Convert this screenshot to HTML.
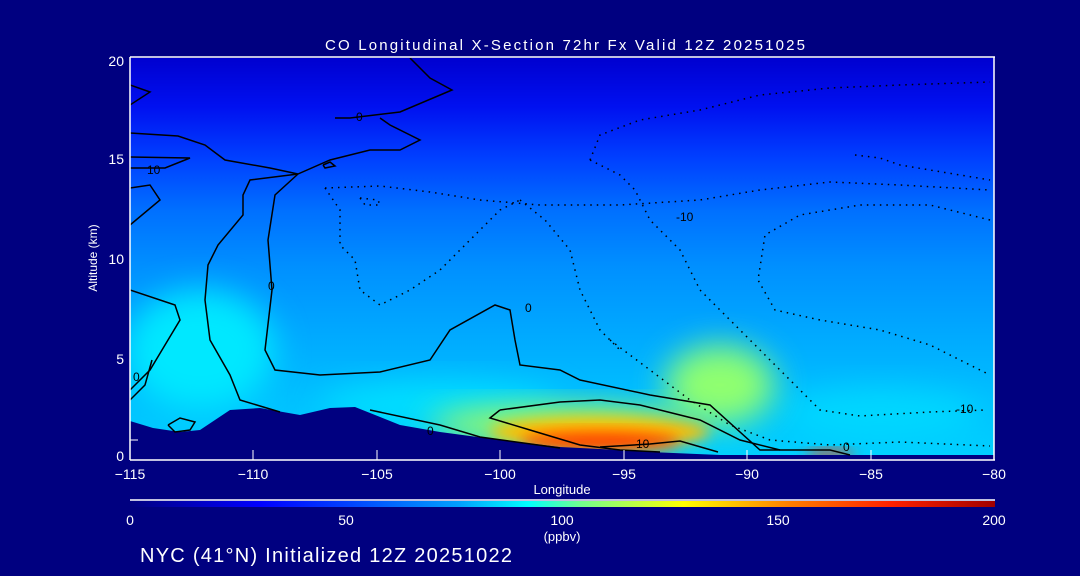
<!DOCTYPE html>
<html><head><style>
html,body{margin:0;padding:0;background:#000080;width:1080px;height:576px;overflow:hidden;}
svg{display:block;}
svg text{font-family:"Liberation Sans",sans-serif;fill:#fff;}
</style></head><body>
<svg width="1080" height="576" viewBox="0 0 1080 576" xmlns="http://www.w3.org/2000/svg">
<defs>
<linearGradient id="bg" x1="0" y1="0" x2="0" y2="1">
<stop offset="0" stop-color="#0000d0"/>
<stop offset="0.12" stop-color="#0010f0"/>
<stop offset="0.25" stop-color="#0040ff"/>
<stop offset="0.38" stop-color="#0070ff"/>
<stop offset="0.52" stop-color="#0090ff"/>
<stop offset="0.68" stop-color="#00a8ff"/>
<stop offset="0.85" stop-color="#00c0ff"/>
<stop offset="1" stop-color="#00d0ff"/>
</linearGradient>
<linearGradient id="cb" x1="0" y1="0" x2="1" y2="0">
<stop offset="0" stop-color="#000080"/>
<stop offset="0.15" stop-color="#0000ff"/>
<stop offset="0.25" stop-color="#0040ff"/>
<stop offset="0.38" stop-color="#00a0ff"/>
<stop offset="0.46" stop-color="#00ffff"/>
<stop offset="0.52" stop-color="#70ff90"/>
<stop offset="0.64" stop-color="#ffff00"/>
<stop offset="0.76" stop-color="#ff8000"/>
<stop offset="0.88" stop-color="#ff2000"/>
<stop offset="1" stop-color="#a00000"/>
</linearGradient>
<filter id="bl" x="-50%" y="-50%" width="200%" height="200%"><feGaussianBlur stdDeviation="16"/></filter>
<filter id="bl2" x="-50%" y="-50%" width="200%" height="200%"><feGaussianBlur stdDeviation="7"/></filter>
<clipPath id="pc"><rect x="130" y="58" width="864" height="402"/></clipPath>
</defs>
<text x="325" y="50" font-size="15" textLength="480" lengthAdjust="spacing">CO Longitudinal X-Section 72hr  Fx Valid 12Z 20251025</text>
<g clip-path="url(#pc)">
<rect x="130" y="58" width="864" height="402" fill="url(#bg)"/>
<ellipse cx="200" cy="350" rx="75" ry="60" fill="#00e8ff" filter="url(#bl)"/>
<ellipse cx="440" cy="405" rx="120" ry="22" fill="#00e0ff" filter="url(#bl)"/>
<ellipse cx="880" cy="415" rx="100" ry="25" fill="#00d8ff" filter="url(#bl)"/>
<ellipse cx="720" cy="385" rx="55" ry="40" fill="#90ff70" filter="url(#bl)"/>
<ellipse cx="560" cy="425" rx="130" ry="18" fill="#b0ff50" filter="url(#bl)"/>
<ellipse cx="600" cy="432" rx="110" ry="15" fill="#ffc000" filter="url(#bl2)"/>
<ellipse cx="600" cy="441" rx="80" ry="9" fill="#ff4000" filter="url(#bl2)"/>
<ellipse cx="830" cy="454" rx="25" ry="4" fill="#ff3000" filter="url(#bl2)"/>
<polygon fill="#000080" points="130,421 153,428 180,432 200,430 230,410 260,408 300,415 330,408 355,407 400,425 440,432 500,440 560,447 600,449 650,452 720,455 994,455 994,470 130,470"/>
<g fill="none" stroke="#000" stroke-width="1.5">
<polyline points="130,85 150,92 130,105"/>
<polyline points="410,58 430,78 452,90 400,112 350,118 335,118"/>
<polyline points="130,133 178,136 205,145 225,160 270,168 298,174 250,180 243,195 243,215 218,245 208,265 205,300 210,340 230,375 240,400 280,412"/>
<polyline points="130,157 190,158 165,168 130,168"/>
<polyline points="130,188 150,185 160,200 130,225"/>
<polyline points="298,174 330,160 370,150 400,150 420,140 390,125 380,118"/>
<polyline points="298,174 275,195 268,240 272,290 265,350 275,370 320,375 380,372 430,360 450,330 495,305 510,310 515,340 520,365 560,370 580,380 650,395 710,405 760,450 830,450 850,455"/>
<polyline points="130,290 175,305 180,320 165,345 150,370 130,390"/>
<polyline points="130,400 145,385 152,360"/>
<polyline points="500,410 560,402 600,400 640,405 680,415 700,420 740,440 780,450"/>
<polyline points="500,410 490,418 530,430 580,445 620,450 660,452"/>
<polyline points="168,425 180,418 195,422 190,430 175,432 168,425"/>
<polyline points="323,165 330,162 335,166 325,168 323,165"/>
<polyline points="370,410 440,425 480,437 560,448"/>
<polyline points="600,447 650,444 680,441 718,452"/>
</g>
<g fill="none" stroke="#000" stroke-width="1.5" stroke-dasharray="1.5,5">
<polyline points="325,188 340,210 340,245 355,260 360,290 380,305 410,290 440,270 470,240 500,210 520,200"/>
<polyline points="325,188 380,186 430,192 480,200 540,205 620,205 700,200 760,190 830,182 900,185 990,190"/>
<polyline points="520,200 545,220 570,250 580,290 600,330 620,350"/>
<polyline points="590,160 600,135 640,120 700,110 760,95 830,88 900,85 990,82"/>
<polyline points="590,160 620,175 635,190 650,220 680,250 700,290 720,310 740,330 770,360 800,390 820,410 860,416 930,412 985,410"/>
<polyline points="610,340 650,370 690,400 730,425 770,440 830,445 900,442 990,446"/>
<polyline points="990,220 930,205 860,205 800,215 765,235 758,280 775,310 820,320 880,330 930,345 990,375"/>
<polyline points="855,155 880,158 900,165 960,175 990,180"/>
<polyline points="360,198 378,200 380,205 365,205 360,198"/>
</g>
<g font-size="12">
<text x="147" y="174" style="fill:#000">10</text>
<text x="676" y="221" style="fill:#000">-10</text>
<text x="956" y="413" style="fill:#000">-10</text>
<text x="636" y="448" style="fill:#000">10</text>
<text x="356" y="121" style="fill:#000">0</text>
<text x="268" y="290" style="fill:#000">0</text>
<text x="525" y="312" style="fill:#000">0</text>
<text x="427" y="435" style="fill:#000">0</text>
<text x="843" y="451" style="fill:#000">0</text>
<text x="133" y="381" style="fill:#000">0</text>
</g>
</g>
<g stroke="#fff" stroke-width="1.5" fill="none">
<line x1="130" y1="57" x2="995" y2="57"/>
<line x1="994" y1="57" x2="994" y2="460"/>
<line x1="130" y1="460" x2="995" y2="460"/>
<line x1="130" y1="57" x2="130" y2="460"/>
<line x1="130" y1="500" x2="995" y2="500"/>
</g>
<g stroke="#fff" stroke-width="1">
<line x1="130" y1="440" x2="138" y2="440"/>
<line x1="253" y1="450" x2="253" y2="460"/><line x1="377" y1="450" x2="377" y2="460"/>
<line x1="500" y1="450" x2="500" y2="460"/><line x1="624" y1="450" x2="624" y2="460"/>
<line x1="747" y1="450" x2="747" y2="460"/><line x1="871" y1="450" x2="871" y2="460"/>
</g>
<rect x="130" y="501" width="865" height="6" fill="url(#cb)"/>
<g font-size="14">
<text x="124" y="66" text-anchor="end">20</text>
<text x="124" y="164" text-anchor="end">15</text>
<text x="124" y="264" text-anchor="end">10</text>
<text x="124" y="364" text-anchor="end">5</text>
<text x="124" y="461" text-anchor="end">0</text>
<text x="130" y="479" text-anchor="middle">−115</text>
<text x="253" y="479" text-anchor="middle">−110</text>
<text x="377" y="479" text-anchor="middle">−105</text>
<text x="500" y="479" text-anchor="middle">−100</text>
<text x="624" y="479" text-anchor="middle">−95</text>
<text x="747" y="479" text-anchor="middle">−90</text>
<text x="871" y="479" text-anchor="middle">−85</text>
<text x="994" y="479" text-anchor="middle">−80</text>
<text x="130" y="525" text-anchor="middle">0</text>
<text x="346" y="525" text-anchor="middle">50</text>
<text x="562" y="525" text-anchor="middle">100</text>
<text x="778" y="525" text-anchor="middle">150</text>
<text x="994" y="525" text-anchor="middle">200</text>
<text x="562" y="541" text-anchor="middle" font-size="13">(ppbv)</text>
<text x="562" y="494" text-anchor="middle" font-size="13">Longitude</text>
</g>
<text transform="translate(97,258) rotate(-90)" font-size="12" text-anchor="middle">Altitude (km)</text>
<text x="140" y="562" font-size="20" textLength="372" lengthAdjust="spacing">NYC (41°N) Initialized 12Z 20251022</text>
</svg>
</body></html>
